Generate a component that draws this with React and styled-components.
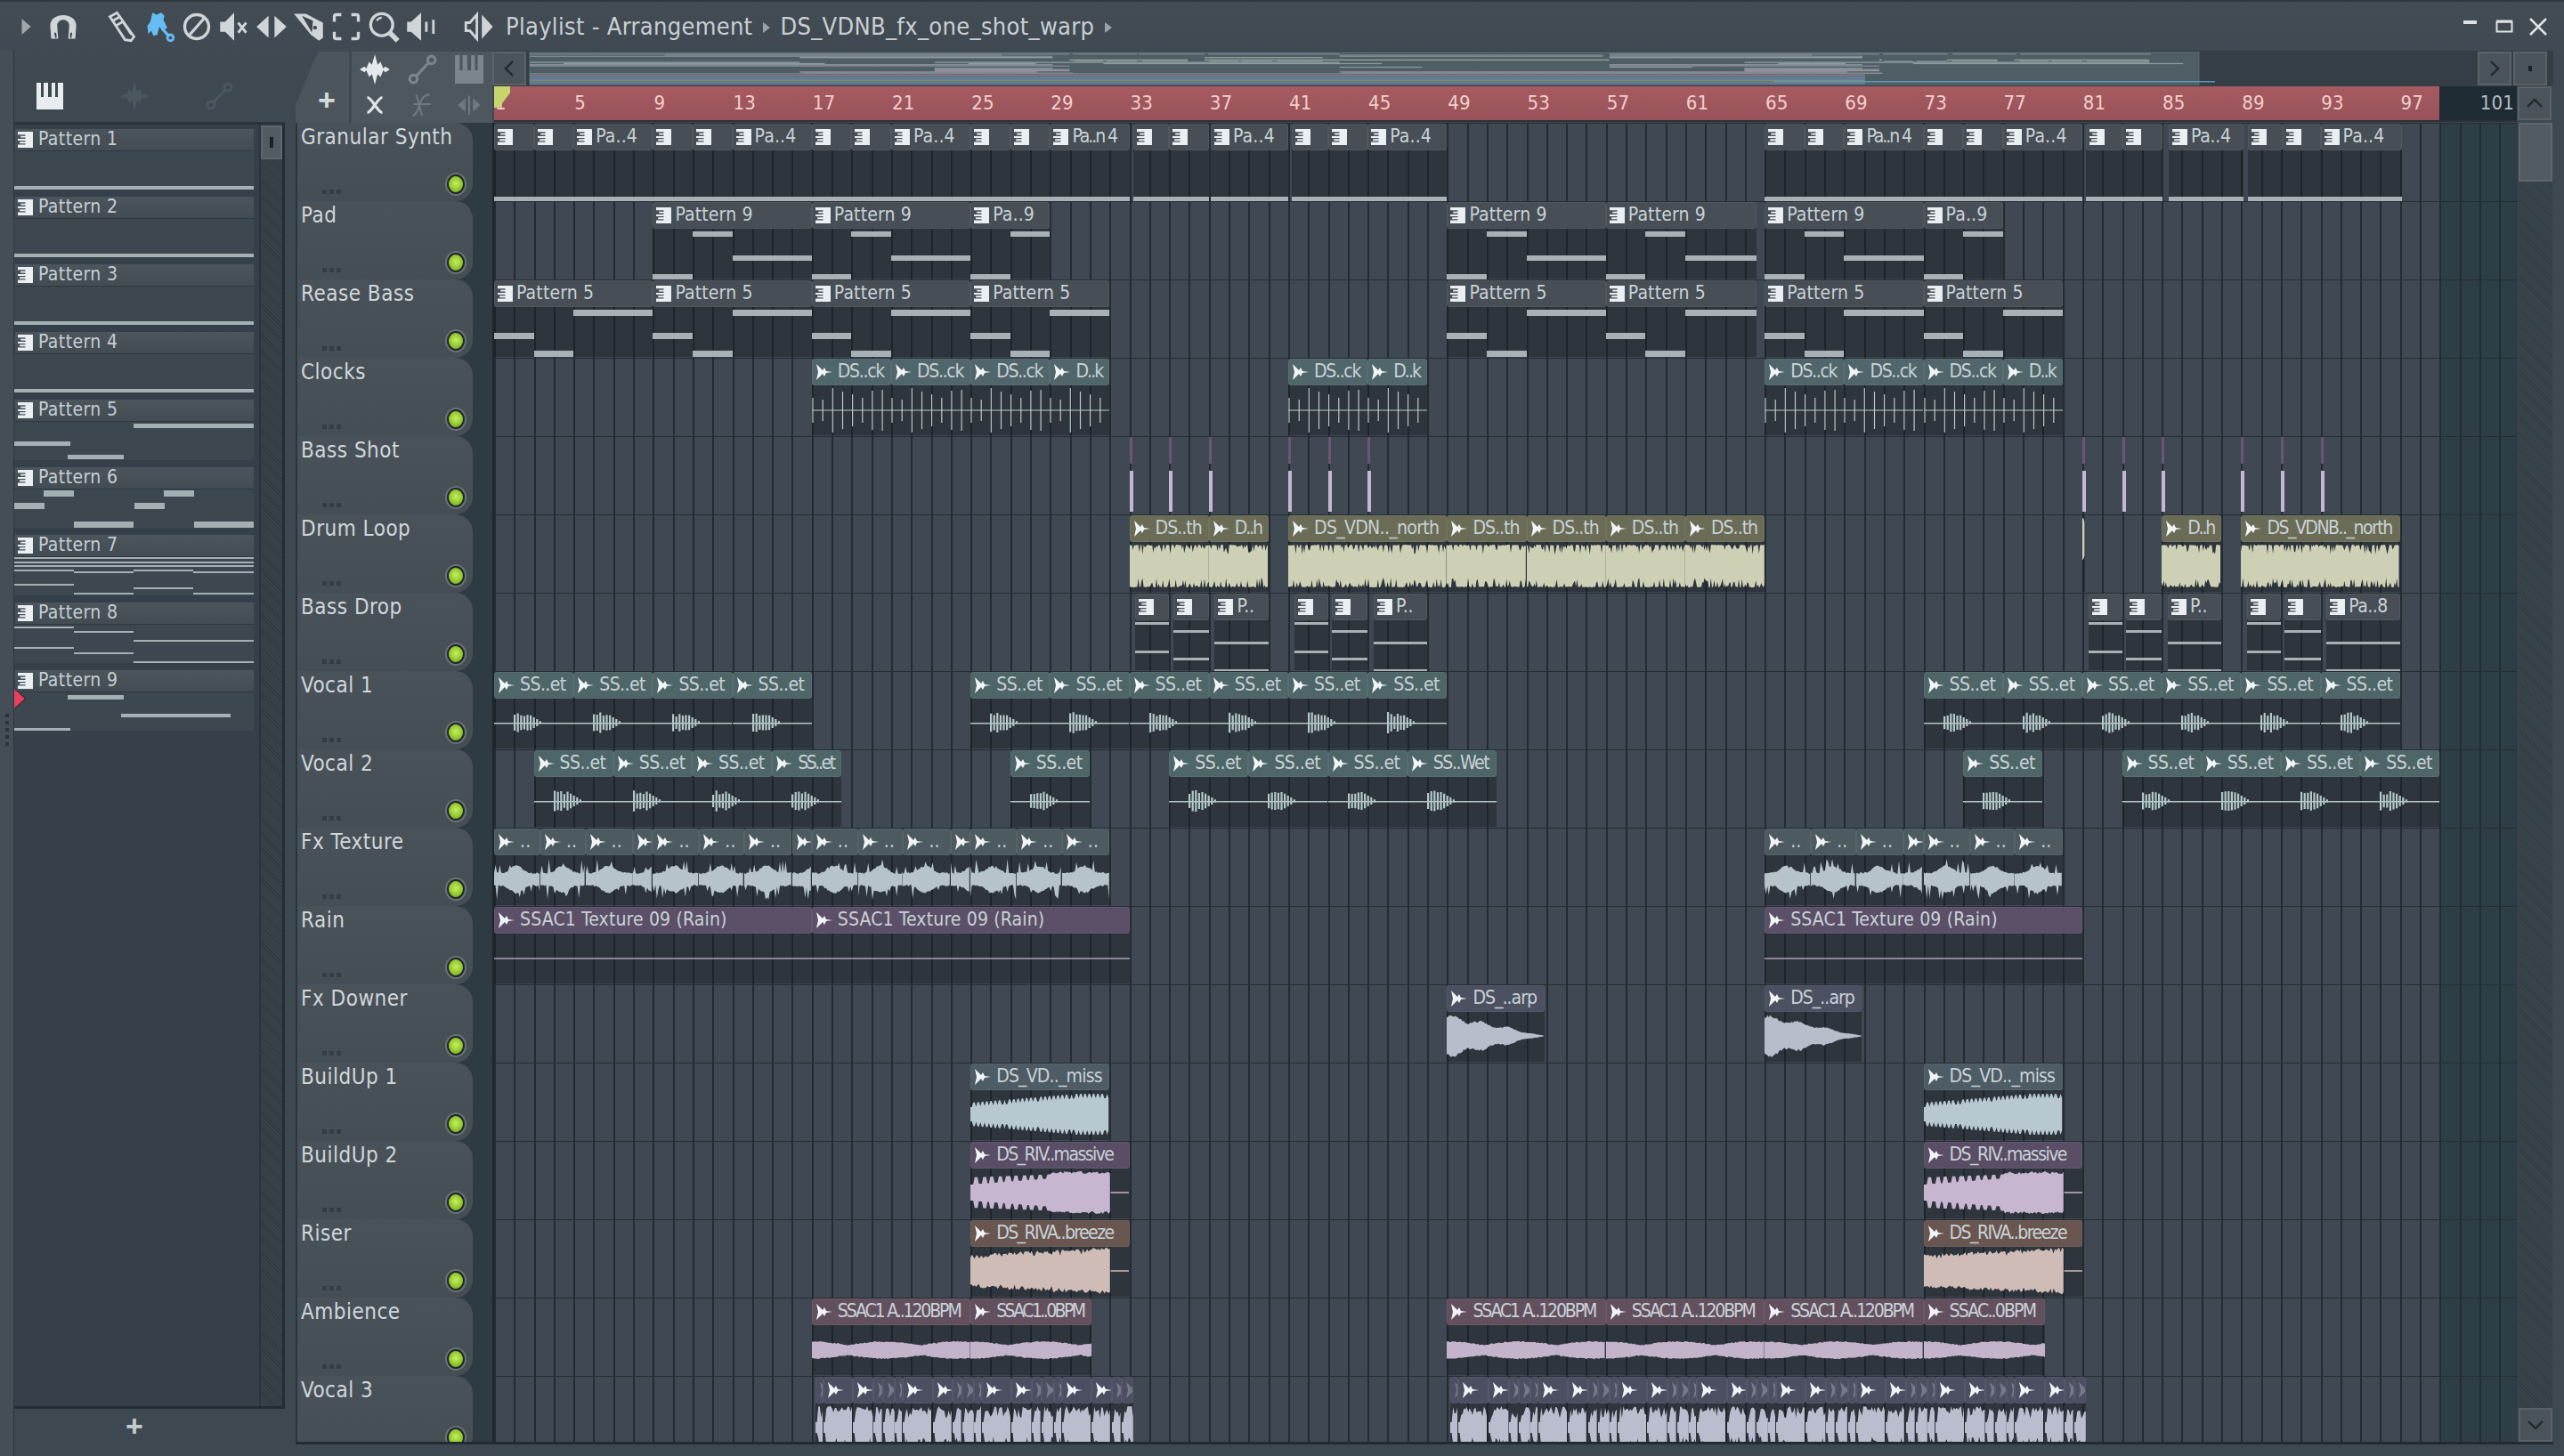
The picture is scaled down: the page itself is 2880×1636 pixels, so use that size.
import React from "react";
import styled, { createGlobalStyle } from "styled-components";

const BAR = 22.3;
const FONT = `"Liberation Sans Narrow", "DejaVu Sans Condensed", "Roboto", sans-serif`;
const barX = bar => (bar - 1) * BAR;

const GlobalStyle = createGlobalStyle`
  html, body { margin: 0; padding: 0; background: #3f4850; }
  body { font-family: ${FONT}; overflow: hidden; }
`;

const Window = styled.div`
  width: 2880px;
  height: 1636px;
  display: flex;
  flex-direction: column;
  overflow: hidden;
  background: linear-gradient(#434b53, #3e4850 120px);
  color: #cbd3d8;
`;

const TitleBar = styled.div`
  height: 57px;
  flex: none;
  display: flex;
  align-items: center;
  padding: 0 19px 0 8px;
  border-top: 2px solid #2f3840;
  box-sizing: border-box;
`;

const ToolButton = styled.div`
  width: 42px;
  height: 42px;
  flex: none;
  display: flex;
  align-items: center;
  justify-content: center;
  margin-left: ${p => p.$gap || 0}px;
  svg { width: 36px; height: 36px; display: block; }
`;

const Title = styled.div`
  font-size: 27px;
  letter-spacing: 0.3px;
  color: #c8d0d5;
  margin-left: 8px;
  white-space: nowrap;
`;

const Sep = styled.span`
  display: inline-block;
  width: 0;
  height: 0;
  margin: 0 11px 2px 12px;
  border-left: 8px solid #9aa3a9;
  border-top: 6px solid transparent;
  border-bottom: 6px solid transparent;
`;

const WinControls = styled.div`
  margin-left: auto;
  display: flex;
  align-items: center;
  gap: 18px;
  svg { width: 20px; height: 20px; display: block; }
`;

const Main = styled.div`
  flex: 1;
  display: flex;
  min-height: 0;
`;

const Gutter = styled.div`
  width: 16px;
  flex: none;
  box-sizing: border-box;
  border-right: 1px solid #2e3840;
  background: #454e56;
  display: flex;
  flex-direction: column;
  align-items: center;
  gap: 4px;
  padding-top: 745px;
`;

const GutterDot = styled.i`
  width: 4px;
  height: 4px;
  background: #2a3339;
`;

const PatternPanel = styled.div`
  width: 304px;
  flex: none;
  display: flex;
  flex-direction: column;
`;

const PickerRow = styled.div`
  height: 80px;
  flex: none;
  display: grid;
  grid-template-columns: repeat(3, 95px);
  margin-left: -8px;
  align-items: center;
  justify-items: center;
  padding-top: 22px;
  box-sizing: border-box;
  svg { width: 32px; height: 32px; }
`;

const PatternBody = styled.div`
  height: 1446px;
  flex: none;
  display: flex;
  background: #35404a;
  border-top: 3px solid #2a343b;
  border-bottom: 3px solid #232c32;
  border-right: 3px solid #232c32;
  box-sizing: border-box;
`;

const PatternList = styled.div`
  width: 269px;
  flex: none;
  padding-top: 5px;
`;

const PatternItem = styled.div`
  height: 76px;
`;

const PatternHead = styled.div`
  height: 25px;
  margin: 0 0 0 1px;
  box-sizing: border-box;
  background: linear-gradient(#4d555c, #444c53);
  border-bottom: 1px solid #2f383f;
  display: flex;
  align-items: center;
  gap: 6px;
  padding: 0 0 3px 3px;
  font-size: 21px;
  letter-spacing: 0.4px;
  color: #c5ced3;
  svg { margin-top: 3px; }
`;

const PatternPreview = styled.div`
  height: 43px;
  position: relative;
  background: #3c4750;
`;

const PatternNote = styled.i.attrs(p => ({
  style: { left: p.$x, top: p.$y, width: p.$w, height: p.$h },
}))`
  position: absolute;
  background: #a5b0b4;
`;

const RedPointer = styled.div`
  position: absolute;
  left: 0;
  top: -4px;
  width: 0;
  height: 0;
  border-left: 12px solid #e8405f;
  border-top: 11px solid transparent;
  border-bottom: 11px solid transparent;
  filter: drop-shadow(1px 0 0 #15191c);
`;

const PanelScroll = styled.div`
  flex: 1;
  display: flex;
  flex-direction: column;
  margin-left: 6px;
  background: repeating-linear-gradient(45deg, #2f3940 0 1px, #394249 1px 3px);
  border-left: 2px solid #2a343a;
`;

const SmallThumb = styled.div`
  height: 38px;
  margin-top: 1px;
  background: #525b62;
  border: 2px solid #5e666d;
  box-sizing: border-box;
  display: flex;
  align-items: center;
  justify-content: center;
  &::after { content: ""; width: 4px; height: 12px; background: #1a2126; }
`;

const AddPattern = styled.div`
  flex: 1;
  display: flex;
  align-items: center;
  justify-content: center;
  font-size: 34px;
  font-family: "Liberation Sans", sans-serif;
  font-weight: 700;
  color: #c3cbcf;
  padding: 0 34px 32px 0;
`;

const Playlist = styled.div`
  margin-left: 12px;
  width: 2536px;
  flex: none;
  display: flex;
  flex-direction: column;
`;

const PlaylistHead = styled.div`
  height: 81px;
  flex: none;
  display: flex;
`;

const Corner = styled.div`
  width: 221px;
  flex: none;
  display: flex;
  padding-top: 1px;
  box-sizing: border-box;
`;

const AddTab = styled.div`
  width: 60px;
  flex: none;
  background: #4c555c;
  clip-path: polygon(25px 0, 100% 0, 100% 100%, 0 100%, 0 60px);
  display: flex;
  align-items: flex-end;
  justify-content: center;
  font-family: "Liberation Sans", sans-serif;
  font-size: 34px;
  font-weight: 700;
  color: #d4dadd;
  padding-bottom: 9px;
  padding-left: 10px;
  box-sizing: border-box;
  line-height: 1;
`;

const ToolGroup = styled.div`
  margin-left: 3px;
  width: 158px;
  flex: none;
  background: #4e575e;
  display: grid;
  grid-template-columns: repeat(3, 1fr);
  grid-template-rows: 1fr 1fr;
  align-items: center;
  justify-items: center;
  svg { width: 34px; height: 34px; display: block; }
`;

const HeadRight = styled.div`
  flex: 1;
  display: flex;
  flex-direction: column;
`;

const OverviewRow = styled.div`
  height: 40px;
  flex: none;
  display: flex;
  gap: 2px;
  background: #353e46;
  padding-top: 1px;
  box-sizing: border-box;
`;

const NavButton = styled.div`
  width: 38px;
  height: 38px;
  flex: none;
  margin-left: ${p => p.$gap || 0}px;
  background: #4c545b;
  border: 2px solid #5a6268;
  box-sizing: border-box;
  display: flex;
  align-items: center;
  justify-content: center;
  svg { width: 22px; height: 22px; }
`;

const Overview = styled.div`
  width: 2192px;
  flex: none;
  svg { display: block; }
`;

const RulerRow = styled.div`
  height: 40px;
  flex: none;
  display: flex;
`;

const Ruler = styled.div`
  width: 2272px;
  flex: none;
  display: flex;
  position: relative;
  overflow: hidden;
  background: linear-gradient(90deg, transparent 2185px, #1f2b32 2185px),
    linear-gradient(#a65b60, #98525a);
  border-bottom: 2px solid #2a3238;
  box-sizing: border-box;
  margin-left: 2px;
`;

const RulerTick = styled.div`
  width: ${BAR * 4}px;
  flex: none;
  box-sizing: border-box;
  padding-left: 1px;
  font-size: 22px;
  line-height: 38px;
  letter-spacing: 0.2px;
  color: ${p => (p.$out ? "#b4bec3" : "#f3cfcb")};
`;

const PlayMarker = styled.div`
  position: absolute;
  left: 0;
  top: 0;
  width: 18px;
  height: 24px;
  background: #c7d66c;
  clip-path: polygon(0 0, 100% 0, 100% 30%, 30% 100%, 0 100%);
`;

const Tracks = styled.div`
  flex: 1;
  display: flex;
  min-height: 0;
  margin-bottom: 13px;
  border-bottom: 3px solid #222b31;
  border-left: 2px solid #2b353c;
`;

const TrackColumn = styled.div`
  width: 2494px;
  flex: none;
  overflow: hidden;
`;

const TrackRow = styled.div`
  height: 88px;
  display: flex;
  background: #2f3b43;
`;

const TrackHeader = styled.div`
  width: 197px;
  flex: none;
  position: relative;
  box-sizing: border-box;
  padding: 2px 0 0 4px;
  background: linear-gradient(#4a5259, #464e55);
  border-radius: 0 20px 20px 0;
  font-size: 24px;
  letter-spacing: 0.5px;
  color: #d0d7db;
  white-space: nowrap;
`;

const Led = styled.i`
  position: absolute;
  right: 9px;
  top: 58px;
  width: 16px;
  height: 18px;
  border-radius: 50%;
  background: radial-gradient(circle at 50% 45%, #c4f05a, #7db51e 80%);
  border: 2px solid #20282c;
  box-shadow: 0 0 0 2px #6b7377;
`;

const Dots = styled.span`
  position: absolute;
  left: 28px;
  top: 75px;
  display: flex;
  gap: 3px;
  i { width: 5px; height: 5px; background: #353d44; }
`;

const Strip = styled.div`
  width: 22px;
  flex: none;
  background: #2f3b43;
  border-right: 2px solid #1d262c;
`;

const Lane = styled.div`
  width: 2272px;
  flex: none;
  position: relative;
  border-top: 1px solid #262e34;
  box-sizing: border-box;
  background:
    repeating-linear-gradient(90deg, #232c32 0 2px, transparent 2px ${BAR}px),
    linear-gradient(90deg, #3f4853 2185px, #2e3e47 2185px);
`;

const Clip = styled.div.attrs(p => ({
  style: { left: barX(p.$from), width: (p.$to - p.$from) * BAR },
}))`
  position: absolute;
  top: 0;
  bottom: 1px;
  display: flex;
  flex-direction: column;
  background: ${p => (p.$bare ? "none" : "rgba(24, 28, 32, 0.42)")};
`;

const ClipHead = styled.div`
  height: 30px;
  flex: none;
  box-sizing: border-box;
  background: ${p => p.$color};
  border: 1px solid rgba(255, 255, 255, 0.05);
  border-radius: 3px;
  display: flex;
  align-items: center;
  gap: 4px;
  padding: 0 0 3px 3px;
  overflow: hidden;
  white-space: nowrap;
  font-size: 21px;
  color: #c9d2d7;
  svg { flex: none; margin-top: 3px; opacity: ${p => (p.$dim ? 0.25 : 1)}; }
`;

const ClipLabel = styled.span.attrs(p => ({
  style: { letterSpacing: `${p.$spacing}px` },
}))`
  flex: none;
`;

const ClipBody = styled.div`
  flex: 1;
  position: relative;
  min-height: 0;
  svg { display: block; }
`;

const ClipNote = styled.i.attrs(p => ({
  style: { left: p.$x, top: p.$y, width: p.$w, height: p.$h },
}))`
  position: absolute;
  background: #a7b1b6;
`;

const ShotTop = styled.i`
  position: absolute;
  left: 0;
  top: 0;
  width: 3px;
  height: 30px;
  background: #6a5672;
`;

const ShotBar = styled.i`
  position: absolute;
  left: 0;
  top: 38px;
  width: 4px;
  height: 46px;
  background: #c6b6d2;
`;

const MainScroll = styled.div`
  margin-left: 1px;
  width: 38px;
  flex: none;
  display: flex;
  flex-direction: column;
  gap: 2px;
  background: repeating-linear-gradient(45deg, #333c43 0 1px, #3a444b 1px 3px);
`;

const ScrollThumb = styled.div`
  height: 66px;
  background: #525b62;
  border: 2px solid #5e666d;
  box-sizing: border-box;
`;

const ScrollDown = styled(NavButton)`
  margin-top: auto;
`;

/* ------- icons ------- */

const PatternIcon = ({ size = 17 }) => (
  <svg width={size} height={size + 1} viewBox="0 0 16 17">
    <path
      fill="#e9eff3"
      d="M0 0h16v17H0v-3.200h8v-1.300H2v-1.800h6V9.400H0V7.600h8V6.200H3V4.400h5V3H0z"
    />
  </svg>
);

const AudioIcon = ({ color = "#f2f5f7" }) => (
  <svg width="21" height="18" viewBox="0 0 21 18">
    <path
      fill={color}
      d="M1 0l7 7 2-3 2 4 7 1-7 1-2 4-2-3-7 7 2-9z"
    />
  </svg>
);

const Ico = ({ children, color = "#cfd5d9", vb = "0 0 32 32" }) => (
  <svg viewBox={vb} fill={color} stroke="none">
    {children}
  </svg>
);

const Line = p => <path fill="none" strokeLinecap="round" {...p} />;

const PianoIcon = ({ color = "#e8edf0" }) => (
  <svg viewBox="0 0 32 32">
    <path
      fill={color}
      d="M1 1h5v16h3V1h5v16h4V1h4v16h3V1h6v30H1z"
    />
  </svg>
);

const WaveIcon = ({ color }) => (
  <svg viewBox="0 0 32 32">
    <path
      fill={color}
      d="M0 16l5-3 2 2 3-7 3 3 3-11 3 11 3-3 3 7 2-2 5 3-5 3-2-2-3 7-3-3-3 11-3-11-3 3-3-7-2 2z"
    />
  </svg>
);

const AutoIcon = ({ color }) => (
  <svg viewBox="0 0 32 32" fill="none" stroke={color} strokeWidth="3">
    <circle cx="7" cy="26" r="4" />
    <circle cx="26" cy="6" r="4" />
    <path d="M10 23L23 9" />
  </svg>
);

const Chevron = ({ dir, color = "#21292e" }) => {
  const d = {
    left: "M15 3L7 11l8 8",
    right: "M7 3l8 8-8 8",
    up: "M3 15l8-8 8 8",
    down: "M3 7l8 8 8-8",
  }[dir];
  return (
    <svg viewBox="0 0 22 22" fill="none" stroke={color} strokeWidth="2.4">
      <path d={d} />
    </svg>
  );
};

const TOOLS = [
  {
    gap: 0,
    icon: (
      <Ico color="#9fa7ac">
        <path d="M12 8l9 8-9 8z" />
      </Ico>
    ),
  },
  {
    gap: 0,
    icon: (
      <Ico>
        <path d="M4 28L3 15C3 1 29 1 29 15l-1 13h-7l1-13C22 7 10 7 10 15l1 13z" />
        <path fill="#3f4850" d="M7 22h2l.5 5H8zM23 22h2l-.7 5h-1.600z" />
      </Ico>
    ),
  },
  {
    gap: 24,
    icon: (
      <Ico>
        <Line
          stroke="#cfd5d9"
          strokeWidth="2.500"
          d="M4 6l7-4 17 24-3 4-6-1zM7 10l7-4M10 15l7-4 8 12"
        />
      </Ico>
    ),
  },
  {
    gap: 0,
    icon: (
      <Ico color="#65bdf4">
        <path d="M9 2l4 2 5-2 3 3-1 4 4 8-5 3-3-4-2 8-4 1-2-5-3 3-1-8 3-4z" />
        <Line stroke="#65bdf4" strokeWidth="3" d="M19 18l6 7" />
        <circle cx="27" cy="27" r="3" fill="none" stroke="#65bdf4" strokeWidth="2.500" />
      </Ico>
    ),
  },
  {
    gap: 0,
    icon: (
      <Ico>
        <circle cx="16" cy="16" r="12" fill="none" stroke="#cfd5d9" strokeWidth="3" />
        <path stroke="#cfd5d9" strokeWidth="3" d="M9 24L23 8" />
      </Ico>
    ),
  },
  {
    gap: 0,
    icon: (
      <Ico>
        <path d="M2 11h5l9-9v28l-9-9H2z" />
        <path stroke="#cfd5d9" strokeWidth="2.500" d="M20 12l8 10M28 12l-8 10" />
      </Ico>
    ),
  },
  {
    gap: 0,
    icon: (
      <Ico>
        <path d="M13 5v22L1 16zM19 5l12 11-12 11z" />
        <path fill="#3f4850" d="M15 8h2v16h-2z" />
      </Ico>
    ),
  },
  {
    gap: 0,
    icon: (
      <Ico>
        <path d="M1 3h12l17 9v15l-4 3-8-6z" />
        <path fill="#3f4850" d="M9 5l10 17 1-12zM22 15a2 2 0 1 0 .1 0z" />
      </Ico>
    ),
  },
  {
    gap: 0,
    icon: (
      <Ico>
        <path
          fill="none"
          stroke="#cfd5d9"
          strokeWidth="3"
          d="M11 4H6Q4 4 4 6v5M21 4h5q2 0 2 2v5M11 28H6q-2 0-2-2v-5M21 28h5q2 0 2-2v-5"
        />
      </Ico>
    ),
  },
  {
    gap: 0,
    icon: (
      <Ico>
        <circle cx="14" cy="14" r="11" fill="none" stroke="#cfd5d9" strokeWidth="3" />
        <path stroke="#cfd5d9" strokeWidth="2" d="M9 10q2-3 5-3" fill="none" />
        <path stroke="#cfd5d9" strokeWidth="5" d="M22 22l8 8" />
      </Ico>
    ),
  },
  {
    gap: 0,
    icon: (
      <Ico>
        <path d="M2 11h4l10-9v28L6 21H2z" />
        <path d="M20 11h2.500v10H20zM27 9h2.500v14H27z" />
      </Ico>
    ),
  },
  {
    gap: 24,
    icon: (
      <Ico>
        <path fill="none" stroke="#cfd5d9" strokeWidth="2.500" d="M2 12h4l7-8v24l-7-8H2z" />
        <path d="M18 4l11 12-11 12z" />
      </Ico>
    ),
  },
];

/* ------- waves ------- */

const rng = seed => {
  let s = seed * 7919 + 13;
  return () => {
    s = (s * 16807) % 2147483647;
    return s / 2147483647;
  };
};

const ampFor = {
  drum: (x, t, r) => (r() < 0.35 ? 24 - r() * 11 : 23 + r()),
  texture: (x, t, r) => {
    const bump = Math.pow(Math.abs(Math.sin(x / 16)), 5) * 8;
    return r() < 0.12 ? 12 + r() * 11 : 6 + bump + r() * 2;
  },
  decay: (x, t, r) => {
    const body = t < 0.6 ? 21 - (12 * t) / 0.6 : 9 * Math.pow(1 - (t - 0.6) / 0.4, 1.3) + 0.6;
    const bump = 1 + 0.15 * Math.sin(x / 5);
    return body * bump * (0.92 + r() * 0.16);
  },
  build: (x, t) => (13 + 10 * Math.min(1, t * 1.3)) - (x % 5 < 2 ? 5 : 0),
  massive: (x, t, r) =>
    t < 0.57 ? (x % 9 < 4 ? 9 + 12 * t : 17 + 6 * t) : 21 + r() * 3,
  breeze: (x, t, r) => 15 + 8 * t + r() * 4 - (r() < 0.1 ? 3 : 0),
  ambience: (x, t, r) => 5 + Math.abs(Math.cos(x / 26)) * 4 + r() * 1.2,
  vocal3: (x, t, r) => {
    if (x % 40 < 3) return 6;
    return r() < 0.25 ? 10 + r() * 8 : 17 + r() * 7;
  },
};

const Wave = ({ kind, w, color, seed, solidTo = 1 }) => {
  const h = 56;
  const mid = kind === "ambience" ? 28 : 27;
  const width = Math.max(1, Math.round(w));
  const r = rng(seed);

  if (kind === "line") {
    return (
      <svg width={width} height={h}>
        <path d={`M0 ${mid + 1}H${width}`} stroke={color} strokeWidth="1.500" />
      </svg>
    );
  }
  if (kind === "clock") {
    let d = `M0 ${mid + 1}H${width} `;
    for (let x = 1, i = 0; x < width; x += BAR / 2, i++) {
      const a = [14, 12, 25, 21, 18, 14, 22, 23][i % 8];
      d += `M${x.toFixed(1)} ${mid + 1 - a}V${mid + 1 + a} `;
    }
    return (
      <svg width={width} height={h}>
        <path d={d} stroke={color} strokeWidth="1.200" fill="none" />
      </svg>
    );
  }
  if (kind === "burst") {
    let d = `M0 ${mid}H${width}v1.500H0z `;
    for (let x = 22; x < 52 && x < width; x += 3.6) {
      const t = (x - 22) / 30;
      const a = t < 0.6 ? 7 + r() * 5 : 18 * (1 - t) + 1;
      d += `M${x.toFixed(1)} ${(mid - a).toFixed(1)}h2.200V${(mid + a).toFixed(1)}h-2.200z `;
    }
    return (
      <svg width={width} height={h}>
        <path d={d} fill={color} />
      </svg>
    );
  }

  const amp = ampFor[kind];
  const end = width * solidTo;
  const step = kind === "drum" ? 1.2 : 1.6;
  const top = [];
  const bottom = [];
  for (let x = 0; x <= end; x += step) {
    const t = x / end;
    top.push(`${x.toFixed(1)} ${(mid - amp(x, t, r)).toFixed(1)}`);
    bottom.unshift(`${x.toFixed(1)} ${(mid + amp(x, t, r)).toFixed(1)}`);
  }
  return (
    <svg width={width} height={h}>
      <path d={`M${top.join("L")}L${bottom.join("L")}z`} fill={color} />
      {solidTo < 1 && (
        <path d={`M${end} ${mid}H${width}`} stroke={color} strokeWidth="1.500" />
      )}
    </svg>
  );
};

/* ------- data ------- */

const c = (from, to, label = "") => ({ from, to, label });
const seq = (bars, labels) =>
  bars.slice(0, -1).map((b, i) => c(b, bars[i + 1], labels[i] ?? labels[labels.length - 1]));

const padNotes = [
  [0, 2, 81],
  [2, 4, 33],
  [4, 8, 60],
];
const bassNotes = [
  [0, 2, 59],
  [2, 4, 79],
  [4, 8, 33],
];

const fxTexture = (from, to) => {
  const out = [];
  for (let b = from; b < to; b += 8) {
    [0, 2.33, 4.6, 7].forEach((o, i, arr) => {
      const start = b + o;
      const stop = Math.min(to, b + (arr[i + 1] ?? 8));
      if (start < to) out.push(c(start, stop, stop - start > 1.6 ? ".." : ""));
    });
  }
  return out;
};

const vocal3 = (from, to) => {
  const offs = [0.18, 0.58, 2.07, 3.1, 3.6, 4.2, 4.6, 6.1, 7.1, 7.6];
  const out = [];
  for (let b = from; b < to; b += 8) {
    offs.forEach((o, i) => {
      out.push(c(b + o, b + (offs[i + 1] ?? 8.18)));
    });
  }
  return out;
};

const TRACKS = [
  {
    name: "Granular Synth",
    kind: "pattern",
    color: "#474e55",
    fullNote: 82,
    clips: [
      c(1, 3), c(3, 5), c(5, 9, "Pa..4"), c(9, 11), c(11, 13), c(13, 17, "Pa..4"),
      c(17, 19), c(19, 21), c(21, 25, "Pa..4"), c(25, 27), c(27, 29), c(29, 33, "Pa..n 4"),
      c(33.2, 35), c(35, 37), c(37.1, 41, "Pa..4"), c(41.2, 43), c(43, 45), c(45, 49, "Pa..4"),
      c(65, 67), c(67, 69), c(69, 73, "Pa..n 4"), c(73, 75), c(75, 77), c(77, 81, "Pa..4"),
      c(81.2, 83), c(83, 85.05), c(85.35, 89.1, "Pa..4"), c(89.35, 91.1), c(91.1, 93), c(93, 97.1, "Pa..4"),
    ],
  },
  {
    name: "Pad",
    kind: "pattern",
    color: "#474e55",
    notes: padNotes,
    noteH: 6,
    clips: [
      c(9, 17, "Pattern 9"), c(17, 25, "Pattern 9"), c(25, 29, "Pa..9"),
      c(49, 57, "Pattern 9"), c(57, 64.6, "Pattern 9"), c(65, 73, "Pattern 9"), c(73, 77, "Pa..9"),
    ],
  },
  {
    name: "Rease Bass",
    kind: "pattern",
    color: "#474e55",
    notes: bassNotes,
    noteH: 7,
    clips: [
      c(1, 9, "Pattern 5"), c(9, 17, "Pattern 5"), c(17, 25, "Pattern 5"), c(25, 32, "Pattern 5"),
      c(49, 57, "Pattern 5"), c(57, 64.6, "Pattern 5"), c(65, 73, "Pattern 5"), c(73, 80, "Pattern 5"),
    ],
  },
  {
    name: "Clocks",
    kind: "audio",
    color: "#50666a",
    wave: "clock",
    waveColor: "#b8cbcc",
    clips: [
      ...seq([17, 21, 25, 29, 32], ["DS..ck", "DS..ck", "DS..ck", "D..k"]),
      ...seq([41, 45, 48], ["DS..ck", "D..k"]),
      ...seq([65, 69, 73, 77, 80], ["DS..ck", "DS..ck", "DS..ck", "D..k"]),
    ],
  },
  { name: "Bass Shot", kind: "shot", shots: [33, 35, 37, 41, 43, 45, 81, 83, 85, 89, 91, 93] },
  {
    name: "Drum Loop",
    kind: "audio",
    color: "#6a6c56",
    wave: "drum",
    waveColor: "#cdd0b5",
    clips: [
      c(33, 37, "DS..th"), c(37, 40, "D..h"), c(41, 49, "DS_VDN.._north"),
      c(49, 53, "DS..th"), c(53, 57, "DS..th"), c(57, 61, "DS..th"), c(61, 65, "DS..th"),
      c(81, 81.15), c(85, 88, "D..h"), c(89, 97, "DS_VDNB.._north"),
    ],
  },
  {
    name: "Bass Drop",
    kind: "drop",
    color: "#474e55",
    clips: [
      { ...c(33.3, 35), lines: [32, 64] }, { ...c(35.2, 37), lines: [41, 72] }, { ...c(37.3, 40, "P.."), lines: [54, 85] },
      { ...c(41.3, 43), lines: [32, 64] }, { ...c(43.2, 45), lines: [41, 72] }, { ...c(45.3, 48, "P.."), lines: [54, 85] },
      { ...c(81.3, 83), lines: [32, 64] }, { ...c(83.2, 85), lines: [41, 72] }, { ...c(85.3, 88, "P.."), lines: [54, 85] },
      { ...c(89.3, 91), lines: [32, 64] }, { ...c(91.2, 93), lines: [41, 72] }, { ...c(93.3, 97, "Pa..8"), lines: [54, 85] },
    ],
  },
  {
    name: "Vocal 1",
    kind: "audio",
    color: "#4e6668",
    wave: "burst",
    waveColor: "#b4c8ca",
    clips: [
      ...seq([1, 5, 9, 13, 17], ["SS..et"]),
      ...seq([25, 29, 33, 37, 41, 45, 49], ["SS..et"]),
      ...seq([73, 77, 81, 85, 89, 93, 97], ["SS..et"]),
    ],
  },
  {
    name: "Vocal 2",
    kind: "audio",
    color: "#4e6668",
    wave: "burst",
    waveColor: "#b4c8ca",
    clips: [
      ...seq([3, 7, 11, 15, 18.5], ["SS..et"]),
      c(27, 31, "SS..et"),
      ...seq([35, 39, 43, 47, 51.5], ["SS..et", "SS..et", "SS..et", "SS..Wet"]),
      c(75, 79, "SS..et"),
      ...seq([83, 87, 91, 95, 99], ["SS..et"]),
    ],
  },
  {
    name: "Fx Texture",
    kind: "audio",
    color: "#4d5b61",
    wave: "texture",
    waveColor: "#b6c3c9",
    clips: [...fxTexture(1, 32), ...fxTexture(65, 80)],
  },
  {
    name: "Rain",
    kind: "audio",
    color: "#5c5068",
    wave: "line",
    waveColor: "#a8a4b4",
    clips: [
      c(1, 17, "SSAC1 Texture 09 (Rain)"),
      c(17, 33, "SSAC1 Texture 09 (Rain)"),
      c(65, 81, "SSAC1 Texture 09 (Rain)"),
    ],
  },
  {
    name: "Fx Downer",
    kind: "audio",
    color: "#4b5161",
    wave: "decay",
    waveColor: "#b8bdcc",
    clips: [c(49, 53.9, "DS_..arp"), c(65, 69.9, "DS_..arp")],
  },
  {
    name: "BuildUp 1",
    kind: "audio",
    color: "#4e5c65",
    wave: "build",
    waveColor: "#b8c8d1",
    clips: [c(25, 32, "DS_VD.._miss"), c(73, 80, "DS_VD.._miss")],
  },
  {
    name: "BuildUp 2",
    kind: "audio",
    color: "#5a4e66",
    wave: "massive",
    waveColor: "#c6b6d0",
    solidTo: 0.885,
    clips: [c(25, 33, "DS_RIV..massive"), c(73, 81, "DS_RIV..massive")],
  },
  {
    name: "Riser",
    kind: "audio",
    color: "#695650",
    wave: "breeze",
    waveColor: "#d0bcb7",
    solidTo: 0.885,
    clips: [c(25, 33, "DS_RIVA..breeze"), c(73, 81, "DS_RIVA..breeze")],
  },
  {
    name: "Ambience",
    kind: "audio",
    color: "#63505f",
    wave: "ambience",
    waveColor: "#c3b3cb",
    clips: [
      c(17, 25, "SSAC1 A..120BPM"), c(25, 31.1, "SSAC1..0BPM"),
      c(49, 57, "SSAC1 A..120BPM"), c(57, 65, "SSAC1 A..120BPM"), c(65, 73, "SSAC1 A..120BPM"), c(73, 79.1, "SSAC..0BPM"),
    ],
  },
  {
    name: "Vocal 3",
    kind: "audio",
    color: "#4c4f62",
    wave: "vocal3",
    waveColor: "#b9bdce",
    clips: [...vocal3(17, 33), ...vocal3(49, 81)],
  },
];

const PATTERNS = [
  { name: "Pattern 1", notes: [[0, 39, 269, 4]] },
  { name: "Pattern 2", notes: [[0, 39, 269, 4]] },
  { name: "Pattern 3", notes: [[0, 39, 269, 4]] },
  { name: "Pattern 4", notes: [[0, 39, 269, 4]] },
  { name: "Pattern 5", notes: [[134, 2, 135, 5], [0, 22, 63, 5], [60, 37, 63, 5]] },
  {
    name: "Pattern 6",
    notes: [
      [33, 1, 34, 7], [168, 1, 34, 7], [0, 15, 34, 7], [135, 15, 34, 7], [67, 36, 67, 7], [202, 36, 67, 7],
    ],
  },
  {
    name: "Pattern 7",
    notes: [
      [0, 0, 269, 2], [0, 5, 269, 2], [0, 9, 269, 2], [0, 14, 67, 2], [67, 16, 67, 2], [134, 14, 67, 2], [201, 16, 68, 2],
      [0, 30, 67, 2], [67, 40, 67, 2], [134, 34, 67, 2], [201, 40, 68, 2],
    ],
  },
  {
    name: "Pattern 8",
    notes: [
      [0, 2, 67, 2], [67, 7, 67, 2], [134, 17, 135, 2], [0, 25, 67, 2], [67, 31, 67, 2], [134, 41, 135, 2],
    ],
  },
  {
    name: "Pattern 9",
    pointer: true,
    notes: [[60, 3, 63, 5], [120, 24, 123, 4], [0, 40, 63, 3]],
  },
];

/* rough glyph widths at 21px, used to squeeze labels into short clips */
const GLYPH = {
  ".": 6, " ": 6.7, i: 5.4, l: 5.4, t: 7.5, r: 7.9, "(": 7.5, ")": 7.5, _: 9.5, s: 10, z: 10, c: 10.5,
  k: 11, v: 11, x: 11, m: 18.4, w: 15, M: 17.8, N: 14.4, D: 14.5, B: 13, R: 13, A: 13, C: 13.5, V: 13, W: 18,
};

const labelSpacing = (label, width) => {
  if (!label) return 0;
  let text = 0;
  for (const ch of label) text += GLYPH[ch] ?? 12;
  const room = width - 37;
  return Math.min(0.15, Math.max(-2.6, (room - text) / label.length));
};

/* ------- parts ------- */

const OverviewMap = () => {
  const scale = 18.95;
  const rows = [];
  TRACKS.forEach((t, i) => {
    if (!t.clips) return;
    t.clips.forEach((cl, j) => {
      rows.push(
        <rect
          key={`${i}-${j}`}
          x={2 + (cl.from - 1) * scale}
          y={2 + i * 1.35}
          width={(cl.to - cl.from) * scale}
          height="1.300"
          fill={t.waveColor || "#9aa8aa"}
          opacity="0.6"
        />
      );
    });
  });
  const bands = ["#6f8f88", "#a8708a", "#5f8fa8", "#7d80ac", "#6c97b2", "#8f9c72", "#5f8fa8", "#7d80ac"];
  return (
    <svg width="2192" height="38">
      <rect x="2" y="0" width="1875" height="38" fill="#4f5e65" stroke="#5b6a70" />
      {rows}
      {bands.map((b, i) => (
        <rect key={b + i} x="2" y={24 + i * 1.6} width="1500" height="1.500" fill={b} opacity="0.75" />
      ))}
      <rect x="1400" y="33" width="495" height="1.500" fill="#5e98b4" />
    </svg>
  );
};

const PatternRow = ({ pattern }) => (
  <PatternItem>
    <PatternHead>
      <PatternIcon />
      {pattern.name}
    </PatternHead>
    <PatternPreview>
      {pattern.notes.map(([x, y, w, h], i) => (
        <PatternNote key={i} $x={x} $y={y} $w={w} $h={h} />
      ))}
      {pattern.pointer && <RedPointer />}
    </PatternPreview>
  </PatternItem>
);

const patternNotesFor = (track, cl) => {
  const span = cl.to - cl.from;
  const out = [];
  if (track.fullNote) {
    out.push([0, span * BAR, track.fullNote, 5]);
  } else if (track.notes) {
    track.notes.forEach(([a, b, y]) => {
      if (a < span) out.push([a * BAR, (Math.min(b, span) - a) * BAR, y, track.noteH]);
    });
  } else if (cl.lines) {
    cl.lines.forEach(y => out.push([0, span * BAR, y, 3]));
  }
  return out;
};

const TrackClip = ({ track, clip, seed }) => {
  const w = (clip.to - clip.from) * BAR;
  const isAudio = track.kind === "audio";
  const narrow = isAudio && track.wave === "vocal3" && w < 22;
  return (
    <Clip $from={clip.from} $to={clip.to}>
      {w > 6 && (
        <ClipHead $color={track.color} $dim={narrow}>
          {isAudio ? <AudioIcon /> : <PatternIcon />}
          {clip.label && <ClipLabel $spacing={labelSpacing(clip.label, w)}>{clip.label}</ClipLabel>}
        </ClipHead>
      )}
      {isAudio && (
        <ClipBody>
          <Wave kind={track.wave} w={w} color={track.waveColor} seed={seed} solidTo={track.solidTo} />
        </ClipBody>
      )}
      {!isAudio &&
        patternNotesFor(track, clip).map(([x, width, y, h], i) => (
          <ClipNote key={i} $x={x} $w={width} $y={y} $h={h} />
        ))}
    </Clip>
  );
};

const Track = ({ track, index }) => (
  <TrackRow>
    <TrackHeader>
      {track.name}
      <Dots>
        <i />
        <i />
        <i />
      </Dots>
      <Led />
    </TrackHeader>
    <Strip />
    <Lane>
      {track.shots &&
        track.shots.map(b => (
          <Clip key={b} $from={b} $to={b + 0.2} $bare>
            <ShotTop />
            <ShotBar />
          </Clip>
        ))}
      {track.clips &&
        track.clips.map((clip, i) => (
          <TrackClip key={i} track={track} clip={clip} seed={index * 40 + i + 1} />
        ))}
    </Lane>
  </TrackRow>
);

export default function App() {
  const ticks = [];
  for (let n = 1; n <= 101; n += 4) ticks.push(n);

  return (
    <Window>
      <GlobalStyle />
      <TitleBar>
        {TOOLS.map((tool, i) => (
          <ToolButton key={i} $gap={tool.gap}>
            {tool.icon}
          </ToolButton>
        ))}
        <Title>
          Playlist - Arrangement
          <Sep />
          DS_VDNB_fx_one_shot_warp
          <Sep />
        </Title>
        <WinControls>
          <svg viewBox="0 0 20 20" fill="#dde2e5">
            <path d="M2 3h15v4H2z" />
          </svg>
          <svg viewBox="0 0 20 20" fill="none" stroke="#dde2e5" strokeWidth="2">
            <path d="M1.500 4.500h17v11h-17z" />
            <path strokeWidth="3" d="M1 4h18" />
          </svg>
          <svg viewBox="0 0 20 20" fill="none" stroke="#dde2e5" strokeWidth="2.500">
            <path d="M1 1l18 18M19 1L1 19" />
          </svg>
        </WinControls>
      </TitleBar>

      <Main>
        <Gutter>
          {[0, 1, 2, 3, 4].map(i => (
            <GutterDot key={i} />
          ))}
        </Gutter>

        <PatternPanel>
          <PickerRow>
            <PianoIcon />
            <WaveIcon color="#4d575e" />
            <AutoIcon color="#4d575e" />
          </PickerRow>
          <PatternBody>
            <PatternList>
              {PATTERNS.map(p => (
                <PatternRow key={p.name} pattern={p} />
              ))}
            </PatternList>
            <PanelScroll>
              <SmallThumb />
            </PanelScroll>
          </PatternBody>
          <AddPattern>+</AddPattern>
        </PatternPanel>

        <Playlist>
          <PlaylistHead>
            <Corner>
              <AddTab>+</AddTab>
              <ToolGroup>
                <WaveIcon color="#e4e9ec" />
                <AutoIcon color="#7b858b" />
                <PianoIcon color="#7b858b" />
                <svg viewBox="0 0 32 32" fill="none" stroke="#dfe4e7" strokeWidth="3">
                  <path d="M8 8c5 0 11 16 16 16M24 8C19 8 13 24 8 24" />
                </svg>
                <svg viewBox="0 0 32 32" fill="none" stroke="#6f797f" strokeWidth="2">
                  <path d="M6 27c8 0 5-22 18-22M10 5l6 22M7 15h18" />
                </svg>
                <svg viewBox="0 0 32 32" fill="#6f797f">
                  <path d="M4 16l8-7v14zM28 16l-8-7v14zM15 6h2v20h-2z" />
                </svg>
              </ToolGroup>
            </Corner>
            <HeadRight>
              <OverviewRow>
                <NavButton>
                  <Chevron dir="left" />
                </NavButton>
                <Overview>
                  <OverviewMap />
                </Overview>
                <NavButton $gap={-4}>
                  <Chevron dir="right" />
                </NavButton>
                <NavButton>
                  <svg viewBox="0 0 22 22" fill="#1a2126">
                    <path d="M9 8h4v6H9z" />
                  </svg>
                </NavButton>
              </OverviewRow>
              <RulerRow>
                <Ruler>
                  {ticks.map(n => (
                    <RulerTick key={n} $out={n > 98}>
                      {n}
                    </RulerTick>
                  ))}
                  <PlayMarker />
                </Ruler>
                <NavButton $gap={1}>
                  <Chevron dir="up" />
                </NavButton>
              </RulerRow>
            </HeadRight>
          </PlaylistHead>

          <Tracks>
            <TrackColumn>
              {TRACKS.map((track, i) => (
                <Track key={track.name} track={track} index={i} />
              ))}
            </TrackColumn>
            <MainScroll>
              <ScrollThumb />
              <ScrollDown>
                <Chevron dir="down" />
              </ScrollDown>
            </MainScroll>
          </Tracks>
        </Playlist>
      </Main>
    </Window>
  );
}
